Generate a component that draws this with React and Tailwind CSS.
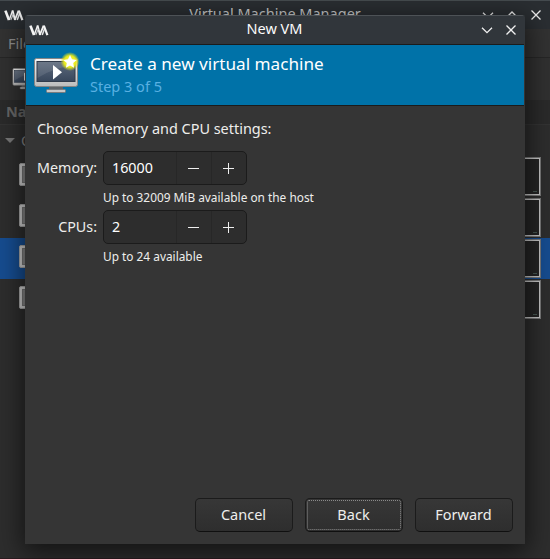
import React from "react";

const FONT = "font-['Noto_Sans',sans-serif]";

function VmLogo({ className }) {
  return (
    <svg className={className} width="20" height="11" viewBox="0 0 20 11" fill="none" stroke="#f4f4f4">
      <path d="M1.400 .6 5 10" strokeWidth="2.6" />
      <path d="M5.200 10 8.600 .6" strokeWidth="1.4" />
      <path d="M8.600 .6 11 10" strokeWidth="1.900" />
      <path d="M6.800 10 9.300 4" strokeWidth="1.1" stroke="#c5c7c9" />
      <path d="M10.800 10 14.600 .6" strokeWidth="1.8" />
      <path d="M13.200 10 15.600 3.500" strokeWidth="1.5" stroke="#e4e5e6" />
      <path d="M14.800 .6 18.400 10.200" strokeWidth="2.200" />
    </svg>
  );
}

function Chevron({ up }) {
  return (
    <svg width="12" height="12" viewBox="0 0 12 12" fill="none" stroke="#f0f0f0" strokeWidth="1.3">
      <path d={up ? "M1 8 6 3l5 5" : "M1 3.7l5 5 5-5"} />
    </svg>
  );
}

function Close() {
  return (
    <svg width="12" height="12" viewBox="0 0 12 12" fill="none" stroke="#f0f0f0" strokeWidth="1.3">
      <path d="M1.5 1.5l9 9M10.5 1.5l-9 9" />
    </svg>
  );
}

function Monitor() {
  return (
    <svg width="50" height="46" viewBox="0 0 50 46" className="shrink-0">
      <defs>
        <linearGradient id="frame" x1="0" y1="0" x2="0" y2="1">
          <stop offset="0" stopColor="#f4f4f4" />
          <stop offset="1" stopColor="#bcbcbc" />
        </linearGradient>
        <linearGradient id="screen" x1="0" y1="0" x2="0" y2="1">
          <stop offset="0" stopColor="#5d6a7c" />
          <stop offset="1" stopColor="#39475c" />
        </linearGradient>
        <radialGradient id="glow">
          <stop offset="0" stopColor="#ffff5a" />
          <stop offset=".62" stopColor="#e6e81c" />
          <stop offset="1" stopColor="#d8e020" stopOpacity="0" />
        </radialGradient>
      </defs>
      <path d="M16 35h14v4H16z" fill="#606468" />
      <rect x="13.5" y="38.5" width="19" height="3" rx="1" fill="#c8c8c8" stroke="#777b7e" />
      <rect x="1.5" y="7.5" width="43" height="28" rx="2" fill="url(#frame)" stroke="#858585" />
      <rect x="4" y="10.500" width="38" height="20" fill="url(#screen)" stroke="#313b4b" />
      <path d="M4.500 11h37v4Q24 15 4.500 27z" fill="#fff" opacity=".1" />
      <path d="M20 14v14.500l9-7.250z" fill="#fff" />
      <circle cx="37" cy="10.500" r="9.500" fill="url(#glow)" />
      <path d="M37 4l2 4.300 4.700.6-3.500 3.200.9 4.700-4.100-2.300-4.100 2.300.9-4.700-3.500-3.200 4.700-.6z" fill="#fff" />
    </svg>
  );
}

function VmRow({ selected }) {
  return (
    <div className={`flex h-[41px] items-center justify-between pl-[19px] pr-[9px] ${selected ? "bg-[#164c8f]" : ""}`}>
      <div className="mb-[4px] h-[23px] w-8 rounded-[2px] border border-[#a4a4a4] bg-[#cfcfcf] p-[2px]">
        <div className="h-full border border-[#777] bg-[#888]" />
      </div>
      <div className="flex h-[39px] w-[70px] border border-[#777] bg-[#242424]">
        <div className="flex h-full w-full items-end justify-end border border-[#c4c4c4] p-[2px]">
          <div className="h-px w-1 bg-[#465650]" />
        </div>
      </div>
    </div>
  );
}

function MainWindow() {
  return (
    <div className="flex h-full flex-col bg-[#2d2d2d]">
      <div className="relative flex h-[29px] shrink-0 items-center justify-between border-t border-[#454b4f] bg-[#2a2e32] pl-1 pr-2">
        <VmLogo />
        <span className="absolute inset-x-0 top-[2px] text-center text-[14.5px] leading-5 text-[#c9cbcc]">Virtual Machine Manager</span>
        <div className="flex gap-3">
          <Chevron />
          <Chevron up />
          <Close />
        </div>
      </div>
      <div className="flex h-[29px] shrink-0 items-center border-b border-[#262626] bg-[#323232] pl-2 pt-px text-[14.5px] text-[#8c8c8c]">File</div>
      <div className="h-[42px] shrink-0 bg-[#303030] pl-[12px] pt-[6px]">
        <div className="h-[28px] w-[28px] origin-top-left scale-[.6]">
          <Monitor />
        </div>
      </div>
      <div className="flex h-[25px] shrink-0 items-center border-b border-[#333] bg-[#2a2a2a] pl-[6px] text-[14.5px] font-bold text-[#666]">Name</div>
      <div className="flex h-[31px] shrink-0 items-center gap-[6px] pl-[5px] text-[14.5px] text-[#858585]">
        <svg width="10" height="5" viewBox="0 0 10 5" fill="#777">
          <path d="M0 0h10L5 5z" />
        </svg>
        <span>QEMU/KVM</span>
      </div>
      <VmRow />
      <VmRow />
      <VmRow selected />
      <VmRow />
      <div className="mt-auto h-px bg-[#2a1c20]" />
    </div>
  );
}

function SpinBox({ value }) {
  return (
    <div className="flex h-[34px] w-[144px] rounded-[5px] border border-[#1b1b1b] bg-[#2d2d2d]">
      <span className="flex-1 pl-[8px] text-[14.3px] leading-[32px] text-white">{value}</span>
      <div className="flex w-[35px] items-center justify-center border-l border-[#272727] pr-[2px]">
        <div className="h-px w-[11px] bg-[#eee]" />
      </div>
      <div className="flex w-[35px] items-center justify-center border-l border-[#272727] pr-[2px]">
        <svg width="11" height="11" viewBox="0 0 11 11" stroke="#eee">
          <path d="M0 5.500h11M5.500 0v11" />
        </svg>
      </div>
    </div>
  );
}

function Field({ label, value, hint }) {
  return (
    <div className="flex h-[59px] gap-[6px]">
      <span className="w-[60px] shrink-0 whitespace-nowrap text-right text-[14.3px] leading-[34px]">{label}</span>
      <div>
        <SpinBox value={value} />
        <div className="whitespace-nowrap pt-[4px] text-[11.87px] leading-[17px]">{hint}</div>
      </div>
    </div>
  );
}

function Button({ children, focused }) {
  return (
    <button className="h-[34px] w-[98px] rounded-[5px] border border-[#1b1b1b] border-b-[#101010] bg-linear-to-b from-[#373737] to-[#2e2e2e] p-px text-[14.5px] text-[#eeeeec]">
      <span className={`flex h-full items-center justify-center rounded-[2px] border pr-px ${focused ? "border-dotted border-[#8a8a8a]" : "border-transparent"}`}>{children}</span>
    </button>
  );
}

function Dialog() {
  return (
    <div className="absolute left-[25px] top-[15px] flex h-[529px] w-[500px] flex-col overflow-hidden rounded-t-[4px] bg-[#353535] text-[#eeeeec]">
      <div className="relative flex h-[29px] shrink-0 items-center justify-between border-t border-[#4d5256] bg-[#31363b] pl-1 pr-2">
        <VmLogo />
        <span className="absolute inset-x-0 top-[2px] pr-px text-center text-[14.5px] leading-5 text-[#fcfcfc]">New VM</span>
        <div className="flex gap-3">
          <Chevron />
          <Close />
        </div>
      </div>
      <div className="mx-px flex h-[62px] shrink-0 border-y border-[#1b1b1b] bg-[#0072a8] pl-[7px] pt-[6px]">
        <Monitor />
        <div className="ml-[7px] pt-px">
          <div className="text-[17.15px] leading-6 text-white">Create a new virtual machine</div>
          <div className="text-[14.5px] leading-[20px] text-[#59b0e2]">Step 3 of 5</div>
        </div>
      </div>
      <div className="flex flex-1 flex-col pl-[12px] pr-[12px] pt-[13px]">
        <div className="mb-[12px] text-[14.45px] leading-5">Choose Memory and CPU settings:</div>
        <Field label="Memory:" value="16000" hint="Up to 32009 MiB available on the host" />
        <Field label="CPUs:" value="2" hint="Up to 24 available" />
        <div className="mb-[12px] mt-auto flex justify-end gap-[12px]">
          <Button>Cancel</Button>
          <Button focused>Back</Button>
          <Button>Forward</Button>
        </div>
      </div>
    </div>
  );
}

export default function App() {
  return (
    <div className={`relative h-[559px] w-[550px] overflow-hidden ${FONT}`}>
      <MainWindow />
      <div className="absolute left-[25px] top-[15px] h-[529px] w-[500px] shadow-[0_6px_24px_2px_rgba(0,0,0,0.6)]" />
      <Dialog />
    </div>
  );
}
